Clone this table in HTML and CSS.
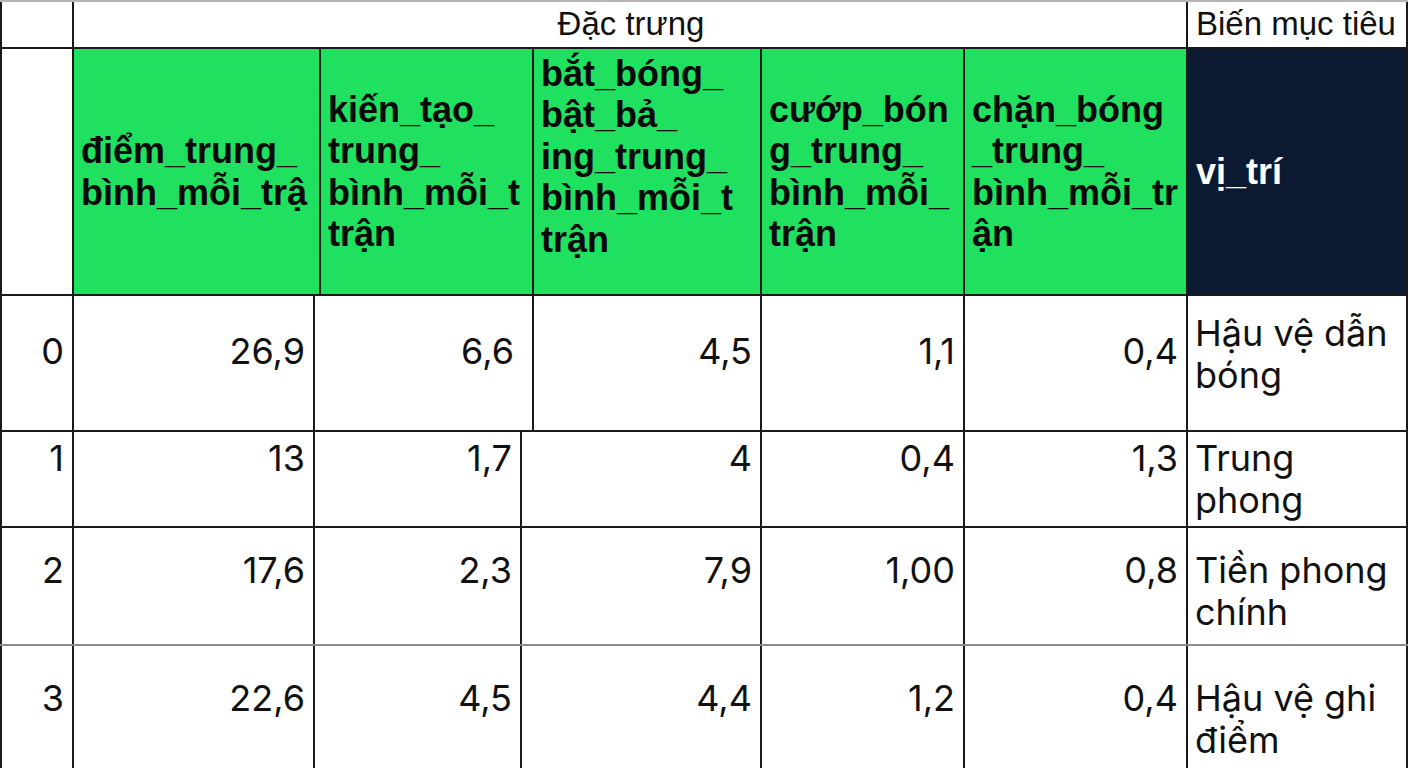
FILE: index.html
```html
<!DOCTYPE html>
<html lang="vi">
<head>
<meta charset="utf-8">
<title>Bảng đặc trưng</title>
<link rel="stylesheet" href="styles.css">
</head>
<body>
<div class="sheet">
  <div class="row row-top">
    <div class="cell idx"></div>
    <div class="cell group">Đặc trưng</div>
    <div class="cell target">Biến mục tiêu</div>
  </div>
  <div class="row row-head">
    <div class="cell idx"></div>
    <div class="cell feat">điểm_trung_<br>bình_mỗi_trậ</div>
    <div class="cell feat">kiến_tạo_<br>trung_<br>bình_mỗi_t<br>trận</div>
    <div class="cell feat feat-tall">bắt_bóng_<br>bật_bả_<br>ing_trung_<br>bình_mỗi_t<br>trận</div>
    <div class="cell feat">cướp_bón<br>g_trung_<br>bình_mỗi_<br>trận</div>
    <div class="cell feat">chặn_bóng<br>_trung_<br>bình_mỗi_tr<br>ận</div>
    <div class="cell label">vị_trí</div>
  </div>
  <div class="row row-body r0">
    <div class="cell idx num">0</div>
    <div class="cell num">26,9</div>
    <div class="cell num wide-pad">6,6</div>
    <div class="cell num">4,5</div>
    <div class="cell num">1,1</div>
    <div class="cell num">0,4</div>
    <div class="cell pos">Hậu vệ dẫn<br>bóng</div>
  </div>
  <div class="row row-body r1">
    <div class="cell idx num">1</div>
    <div class="cell num">13</div>
    <div class="cell num">1,7</div>
    <div class="cell num">4</div>
    <div class="cell num">0,4</div>
    <div class="cell num">1,3</div>
    <div class="cell pos">Trung<br>phong</div>
  </div>
  <div class="row row-body r2">
    <div class="cell idx num">2</div>
    <div class="cell num">17,6</div>
    <div class="cell num">2,3</div>
    <div class="cell num">7,9</div>
    <div class="cell num">1,00</div>
    <div class="cell num">0,8</div>
    <div class="cell pos">Tiền phong<br>chính</div>
  </div>
  <div class="row row-body r3">
    <div class="cell idx num">3</div>
    <div class="cell num">22,6</div>
    <div class="cell num">4,5</div>
    <div class="cell num">4,4</div>
    <div class="cell num">1,2</div>
    <div class="cell num">0,4</div>
    <div class="cell pos">Hậu vệ ghi<br>điểm</div>
  </div>
</div>
</body>
</html>
```
FILE: styles.css
```css
* { box-sizing: border-box; }

html, body {
  margin: 0;
  padding: 0;
  background: #ffffff;
}

body {
  width: 1408px;
  height: 768px;
  overflow: hidden;
  color: #111111;
  font-family: "Inter", "Liberation Sans", sans-serif;
}

.sheet {
  width: 1408px;
  border-top: 2px solid #b5b5b5;
}

.row {
  display: grid;
  border-bottom: 2px solid #1a1a1a;
}

.cell {
  border-right: 2px solid #1a1a1a;
  min-width: 0;
}

.cell.idx {
  border-left: 2px solid #1a1a1a;
}

/* top group row */
.row-top {
  grid-template-columns: 74px 1114px 220px;
  height: 47px;
}

.row-top .cell {
  font-family: "Liberation Sans", Arial, sans-serif;
  font-size: 33px;
  line-height: 44px;
  color: #111111;
}

.group {
  text-align: center;
  padding-left: 2px;
}

.target {
  padding-left: 8px;
  white-space: nowrap;
}

/* header row */
.row-head {
  grid-template-columns: 74px 247px 213px 228px 203px 223px 220px;
  height: 247px;
}

.feat, .label {
  display: flex;
  align-items: center;
  padding-left: 7px;
  font-family: "Liberation Sans", Arial, sans-serif;
  font-weight: 700;
  font-size: 36px;
  line-height: 41.5px;
  white-space: nowrap;
  overflow: hidden;
}

.feat {
  background: #20e060;
  color: #0a0a0a;
}

.feat-tall {
  padding-bottom: 30px;
}

.label {
  background: #0b1a31;
  color: #ffffff;
  padding-left: 8px;
}

/* body rows */
.row-body {
  grid-template-columns: 74px 241px 207px 240px 203px 223px 220px;
}

.row-body.r0 {
  grid-template-columns: 74px 241px 219px 228px 203px 223px 220px;
  height: 136px;
}

.row-body.r1 { height: 96px; }
.row-body.r2 { height: 118px; border-bottom-color: #8a8a8a; }
.row-body.r3 { height: 124px; }

.row-body .cell {
  font-size: 36px;
  line-height: 42px;
  color: #111111;
}

.num {
  text-align: right;
  padding-right: 8px;
}

.num.wide-pad {
  padding-right: 18px;
}

.pos {
  padding-left: 7px;
  white-space: nowrap;
}

.r0 .num { padding-top: 34px; }
.r0 .pos { padding-top: 16px; }
.r1 .cell { padding-top: 5px; }
.r2 .cell { padding-top: 21px; }
.r3 .cell { padding-top: 31px; }
```
